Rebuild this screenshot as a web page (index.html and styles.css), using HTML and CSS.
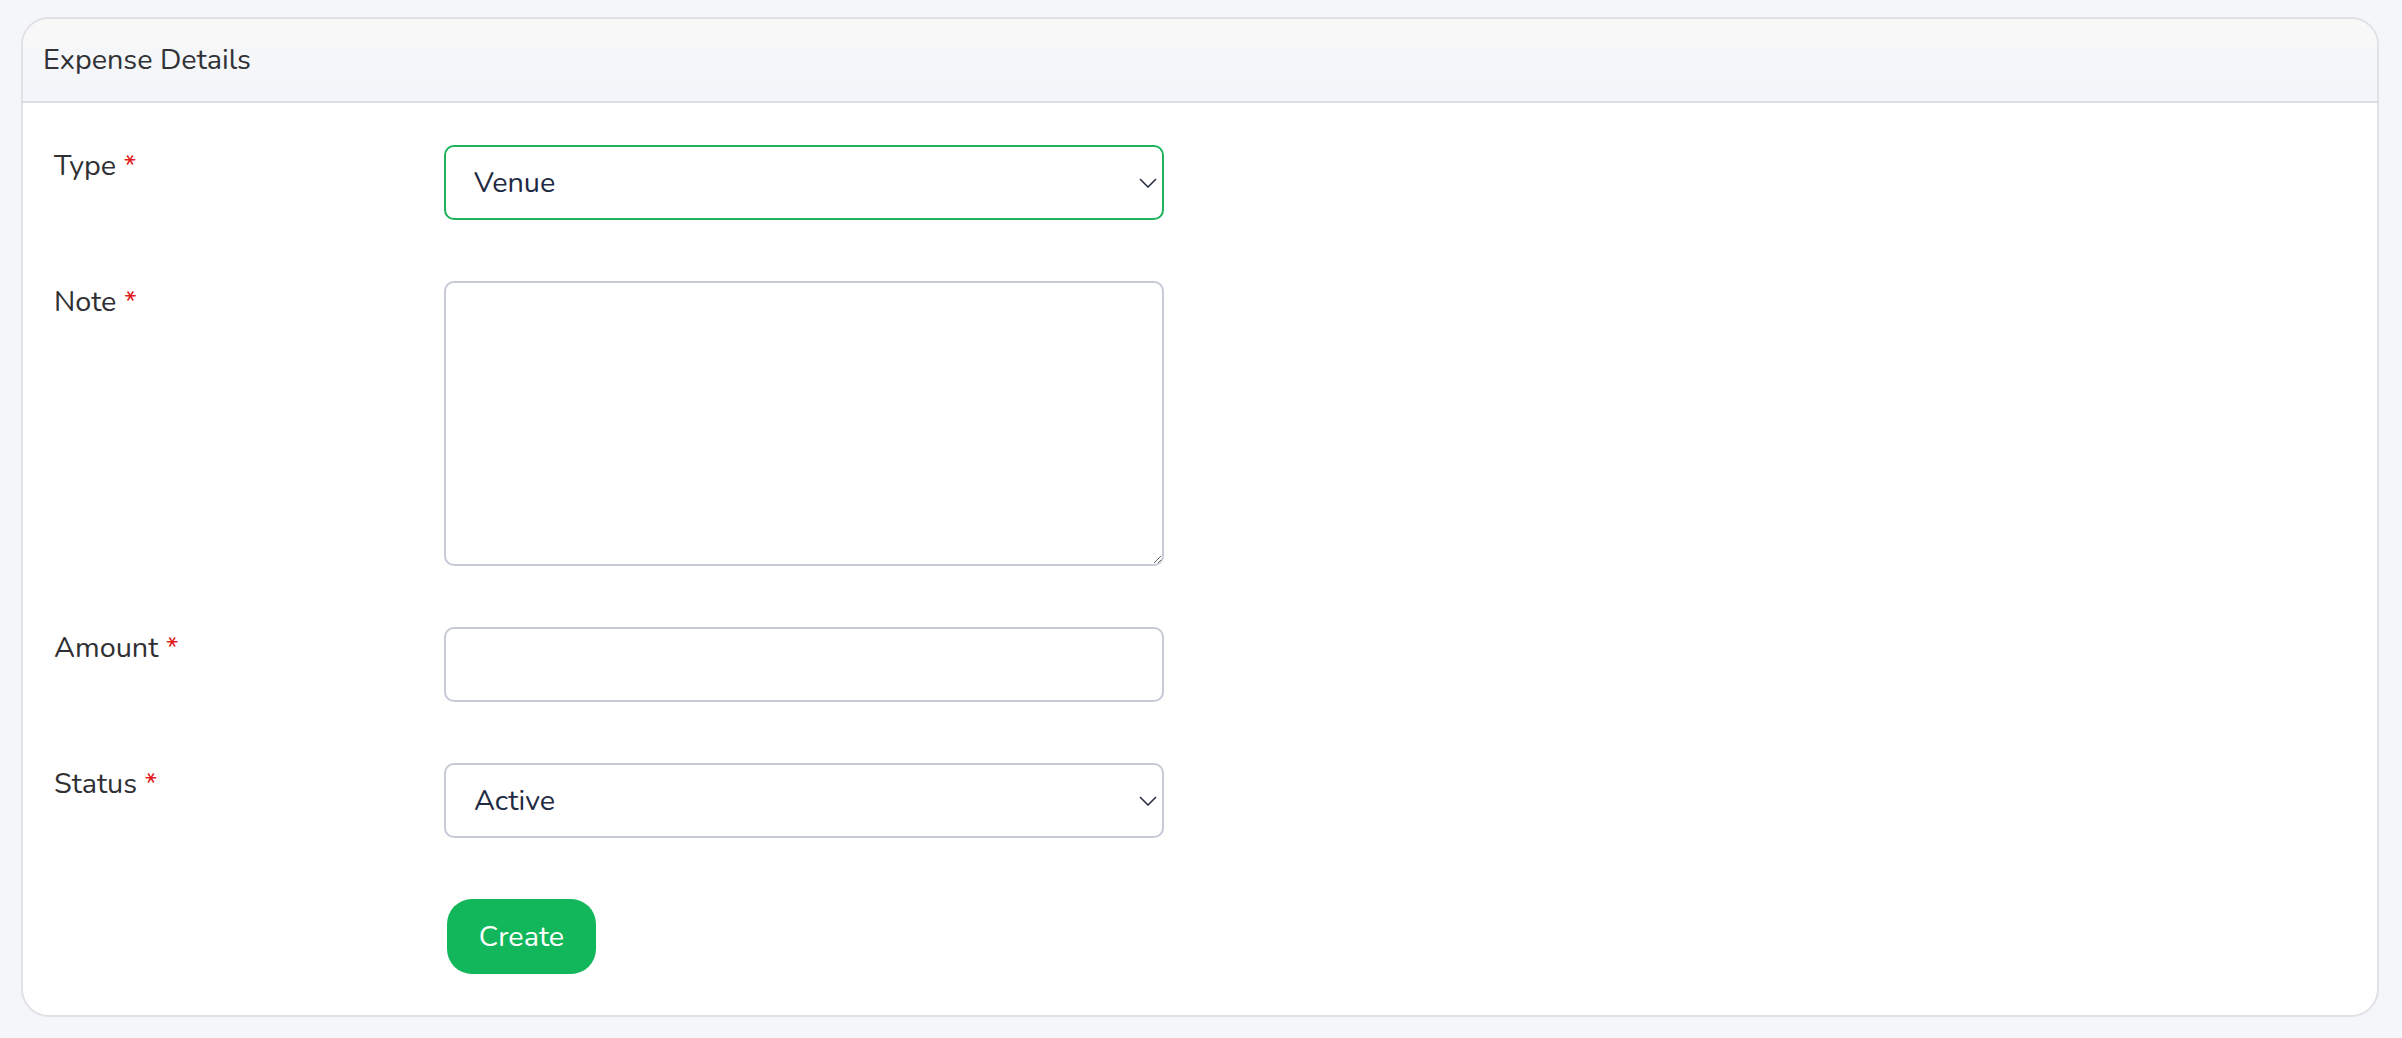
FILE: index.html
```html
<!DOCTYPE html>
<html lang="en">
<head>
    <meta charset="UTF-8">
    <meta name="viewport" content="width=device-width, initial-scale=1.0">
    <title>Expense Details</title>
    <link rel="stylesheet" href="styles.css">
</head>
<body>
    <div class="card">
        <div class="card-header">Expense Details</div>
        <form class="card-body">
            <div class="form-row">
                <label class="form-label">Type <span class="required">*</span></label>
                <div class="select-wrap">
                    <select class="form-control is-focused">
                        <option>Venue</option>
                        <option>Catering</option>
                        <option>Transport</option>
                    </select>
                    <svg class="chevron" width="18" height="10" viewBox="0 0 18 10"><path d="M1 1l8 8 8-8" fill="none" stroke="#2b3245" stroke-width="1.6"/></svg>
                </div>
            </div>
            <div class="form-row">
                <label class="form-label">Note <span class="required">*</span></label>
                <textarea class="form-control note"></textarea>
            </div>
            <div class="form-row">
                <label class="form-label">Amount <span class="required">*</span></label>
                <input type="text" class="form-control">
            </div>
            <div class="form-row">
                <label class="form-label">Status <span class="required">*</span></label>
                <div class="select-wrap">
                    <select class="form-control">
                        <option>Active</option>
                        <option>Inactive</option>
                    </select>
                    <svg class="chevron" width="18" height="10" viewBox="0 0 18 10"><path d="M1 1l8 8 8-8" fill="none" stroke="#2b3245" stroke-width="1.6"/></svg>
                </div>
            </div>
            <div class="form-row">
                <span></span>
                <div><button type="button" class="btn-create">Create</button></div>
            </div>
        </form>
    </div>
</body>
</html>
```

FILE: styles.css
```css
body {
    font-family: 'Nunito', 'Lato', sans-serif;
    background: #f4f6f9;
    color: #2f3033;
    margin: 0;
    padding: 17px 23px 20px 21px;
}

.card {
    background: #fff;
    border: 2px solid #dfe1e4;
    border-radius: 28px;
    overflow: hidden;
}

.card-header {
    background: linear-gradient(#f8f8f7, #f3f5fa);
    border-bottom: 2px solid #dadde2;
    font-size: 28.8px;
    line-height: 40px;
    padding: 21px 20px 21px 20px;
    color: #303236;
}

.card-body {
    padding: 42px 31px 41px 31px;
    display: flex;
    flex-direction: column;
    gap: 61px;
}

.form-row {
    display: grid;
    grid-template-columns: 390px 720px;
    align-items: start;
}

.form-label {
    font-size: 28.8px;
    line-height: 40px;
    padding-top: 1px;
    color: #2f3033;
}

.required {
    color: #e31b1b;
}

.form-control {
    display: block;
    width: 100%;
    box-sizing: border-box;
    height: 75px;
    font-family: inherit;
    font-size: 28.8px;
    color: #1f2a44;
    background: #fff;
    border: 2px solid #c5cad6;
    border-radius: 10px;
    padding: 0 28px;
    outline: none;
    margin: 0;
}

.form-control.is-focused {
    border-color: #1fb35c;
}

select.form-control {
    appearance: none;
    -webkit-appearance: none;
}

.select-wrap {
    position: relative;
}

.chevron {
    position: absolute;
    right: 7px;
    top: 33px;
    pointer-events: none;
}

textarea.note {
    height: 285px;
    resize: vertical;
    padding: 12px 28px;
}

.btn-create {
    margin-left: 3px;
    width: 149px;
    height: 75px;
    border: none;
    border-radius: 25px;
    background: #12b75b;
    color: #fff;
    font-family: inherit;
    font-size: 28.8px;
    cursor: pointer;
}

.btn-create:hover {
    background: #0fa450;
}
```
